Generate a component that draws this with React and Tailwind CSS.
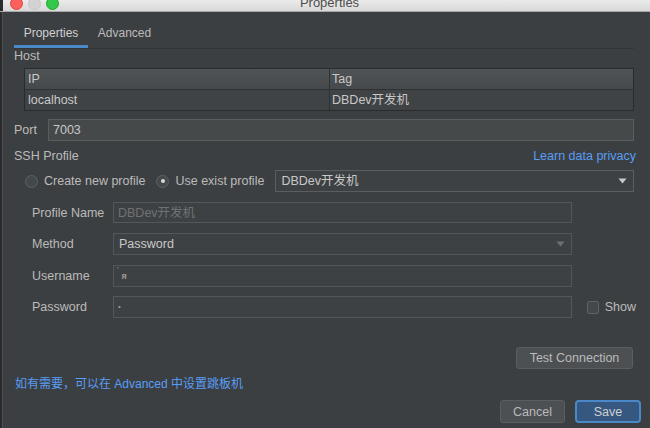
import React from "react";

// Darcula "Properties" dialog (SSH profile)

const FONT = { fontFamily: '"Liberation Sans", "Noto Sans CJK SC", sans-serif' };

function Field({ label, children, className = "" }) {
  return (
    <div className={`flex items-center ${className}`}>
      <span className="w-[81px] shrink-0 text-[12.5px] text-[#bbbbbb]">{label}</span>
      {children}
    </div>
  );
}

function Arrow({ dim }) {
  return (
    <svg width="9" height="6" viewBox="0 0 9 6" className="shrink-0">
      <path d="M0.5 0.5 L8.5 0.5 L4.5 5.5 Z" fill={dim ? "#6e7173" : "#c9c9c9"} />
    </svg>
  );
}

export default function App() {
  return (
    <div className="flex h-[428px] w-[650px] flex-col overflow-hidden bg-[#3c3f41] leading-[14px]" style={FONT}>
      {/* title bar */}
      <div className="flex h-[12px] shrink-0 overflow-hidden border-b border-[#a9a9a9] bg-gradient-to-b from-[#ebebeb] to-[#d8d8d8]">
        <div className="w-[3px] bg-[#2b2b2b]" />
        <div className="-mt-[3px] ml-[7px] flex h-[13px] items-start gap-[5px]">
          <span className="h-[13px] w-[13px] rounded-full border border-[#e0443e] bg-[#fc605c]" />
          <span className="h-[13px] w-[13px] rounded-full border border-[#c6c6c6] bg-[#d3d3d3]" />
          <span className="h-[13px] w-[13px] rounded-full border border-[#1aab29] bg-[#34c84a]" />
        </div>
        <div className="-mt-[4px] flex-1 pr-[50px] text-center text-[13px] text-[#4d4d4d]">Properties</div>
      </div>

      <div className="flex flex-1">
        <div className="w-[3px] shrink-0 border-r border-[#4e5052] bg-[#2b2b2b]" />
        <div className="flex flex-1 flex-col pl-[11px] pr-[16px] text-[12.5px]">
          {/* tabs */}
          <div className="flex h-[37px] shrink-0 border-b border-[#333537]">
            <div className="flex w-[74px] justify-center border-b-[3px] border-[#4a88c7] pt-[14px] text-[12px] text-[#d0d0d0]">
              Properties
            </div>
            <div className="flex w-[73px] justify-center pt-[14px] text-[12px] text-[#bbbbbb]">Advanced</div>
          </div>

          <div className="text-[#bbbbbb]">Host</div>

          {/* table */}
          <div className="ml-[10px] mt-[5px] border border-[#2b2b2b] text-[#c8c8c8]">
            <div className="flex h-[21px] items-center border-b border-[#2f3133] bg-gradient-to-b from-[#505456] to-[#46494b]">
              <div className="flex h-full w-[305px] items-center border-r border-[#2f3133] pl-[3px]">IP</div>
              <div className="pl-[2px]">Tag</div>
            </div>
            <div className="flex h-[20px] items-center bg-[#404345]">
              <div className="flex h-full w-[305px] items-center border-r border-[#2f3133] pl-[3px]">localhost</div>
              <div className="pl-[2px]">DBDev开发机</div>
            </div>
          </div>

          {/* port */}
          <div className="mt-[8px] flex items-center">
            <span className="w-[34px] text-[#bbbbbb]">Port</span>
            <div className="flex h-[22px] flex-1 items-center border border-[#5b5e60] bg-[#45494a] pl-[4px] text-[#c8c8c8]">
              7003
            </div>
          </div>

          {/* ssh profile */}
          <div className="mt-[8px] flex items-center justify-between">
            <span className="text-[#bbbbbb]">SSH Profile</span>
            <span className="-mr-[2px] text-[#589df6]">Learn data privacy</span>
          </div>

          <div className="mt-[7px] flex h-[22px] items-center text-[#bbbbbb]">
            <span className="ml-[11px] h-[13px] w-[13px] rounded-full border border-[#5e6264] bg-[#43484a]" />
            <span className="ml-[6px]">Create new profile</span>
            <span className="ml-[11px] flex h-[13px] w-[13px] items-center justify-center rounded-full border border-[#5e6264] bg-[#46494b]">
              <span className="h-[4px] w-[4px] rounded-full bg-[#d8d8d8]" />
            </span>
            <span className="ml-[6px]">Use exist profile</span>
            <div className="ml-[11px] flex h-[22px] flex-1 items-center justify-between border border-[#5b5e60] bg-[#3e4143] pl-[5px] pr-[6px] text-[#c8c8c8]">
              <span>DBDev开发机</span>
              <Arrow />
            </div>
          </div>

          {/* profile fields */}
          <div className="ml-[18px] mr-[62px] flex flex-col">
            <Field label="Profile Name" className="mt-[10px]">
              <div className="flex h-[21px] flex-1 items-center border border-[#54575a] bg-[#3e4143] pl-[4px] text-[#6f7274]">
                DBDev开发机
              </div>
            </Field>
            <Field label="Method" className="mt-[10px]">
              <div className="flex h-[22px] flex-1 items-center justify-between border border-[#54575a] bg-[#3e4143] pl-[5px] pr-[6px] text-[#c8c8c8]">
                <span>Password</span>
                <Arrow dim />
              </div>
            </Field>
            <Field label="Username" className="mt-[10px]">
              <div className="flex h-[22px] flex-1 items-start border border-[#54575a] bg-[#3e4143] pl-[3px] text-[#9a9a9a]">
                <span className="text-[8px] leading-[8px]">'</span>
                <span className="ml-[3px] mt-[6px] text-[9px] font-bold leading-[9px]">ᴙ</span>
              </div>
            </Field>
            <div className="mt-[9px] flex items-center">
              <span className="w-[81px] shrink-0 text-[#bbbbbb]">Password</span>
              <div className="flex h-[22px] flex-1 items-center border border-[#54575a] bg-[#3e4143] pl-[4px] text-[8px] text-[#9a9a9a]">
                •
              </div>
              <div className="-mr-[64px] flex w-[64px] items-center justify-end gap-[6px] text-[#bbbbbb]">
                <span className="h-[13px] w-[12px] rounded-[2px] border border-[#5f6365] bg-[#43484a]" />
                <span>Show</span>
              </div>
            </div>
          </div>

          <div className="mt-[29px] flex justify-end">
            <button className="mr-[1px] h-[22px] w-[117px] rounded-[3px] border border-[#5b5e60] bg-[#4c5052] text-[#bbbbbb]">
              Test Connection
            </button>
          </div>

          <div className="ml-[1px] mt-[8px] text-[12px] text-[#589df6]">如有需要，可以在 Advanced 中设置跳板机</div>

          <div className="-mr-[7px] mt-[9px] flex justify-end gap-[10px]">
            <button className="h-[23px] w-[65px] rounded-[3px] border border-[#5b5e60] bg-[#4c5052] text-[#bbbbbb]">
              Cancel
            </button>
            <button className="h-[23px] w-[66px] rounded-[4px] border-2 border-[#4a88c7] bg-[#365880] text-[#d0d0d0]">
              Save
            </button>
          </div>
        </div>
      </div>
    </div>
  );
}
